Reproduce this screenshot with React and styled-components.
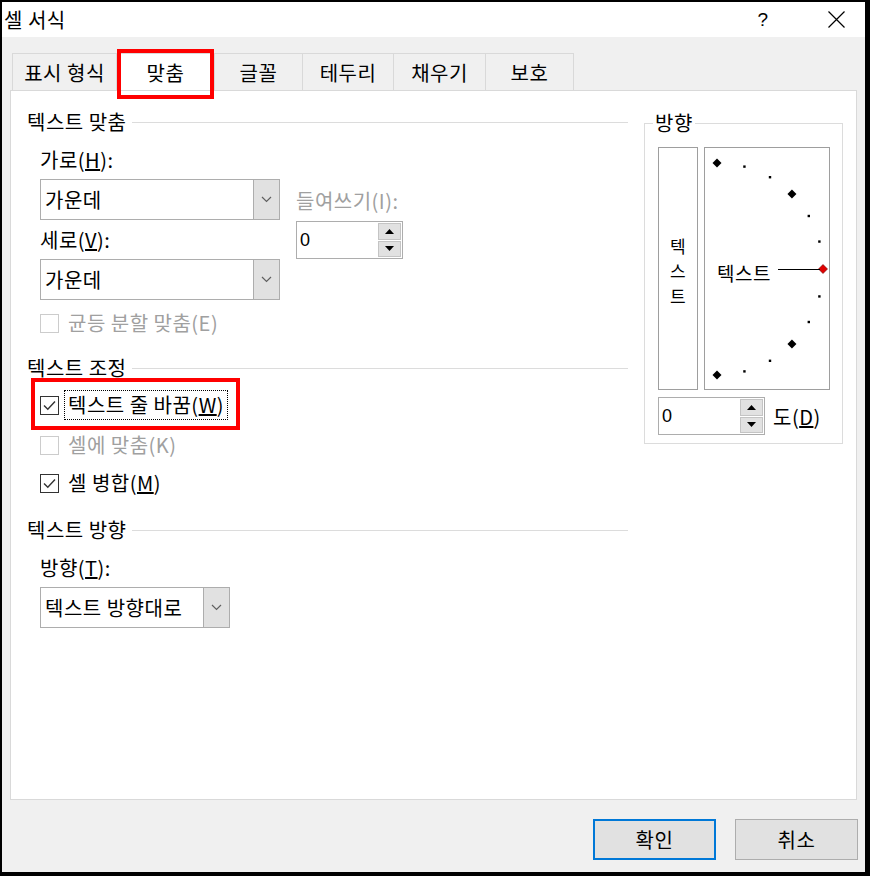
import React from "react";
import styled, { createGlobalStyle } from "styled-components";

const GlobalStyle = createGlobalStyle`
  body {
    margin: 0;
    padding: 0;
    background: #000;
    font-family: "Noto Sans CJK KR", "Noto Sans", sans-serif;
    font-size: 20px;
    letter-spacing: 0.5px;
    color: #000;
  }
`;

const Dialog = styled.div`
  width: 870px;
  height: 876px;
  box-sizing: border-box;
  border-style: solid;
  border-color: #000;
  border-width: 2px 5px 4px 2px;
  background: #f0f0f0;
  display: flex;
  flex-direction: column;
`;

const TitleBar = styled.div`
  height: 35px;
  background: #fff;
  display: flex;
  align-items: center;
  padding-left: 2px;
`;

const Title = styled.div`
  flex: 1;
  line-height: 20px;
  margin-top: 1px;
`;

const HelpButton = styled.div`
  width: 30px;
  text-align: center;
  font-family: "Liberation Sans", sans-serif;
  font-size: 19px;
  margin-right: 49px;
`;

const CloseButton = styled.div`
  width: 18px;
  height: 18px;
  margin-right: 20px;
  display: flex;
  align-items: center;
  justify-content: center;
`;

const TabList = styled.div`
  display: flex;
  margin-top: 16px;
  padding-left: 10px;
  height: 37px;
`;

const Tab = styled.div`
  position: relative;
  width: ${(p) => p.$w}px;
  box-sizing: border-box;
  border: 1px solid #d9d9d9;
  border-left-width: ${(p) => (p.$first ? 1 : 0)}px;
  border-bottom: none;
  background: ${(p) => (p.$active ? "#fff" : "#f0f0f0")};
  display: flex;
  align-items: center;
  justify-content: center;
  padding-top: 1px;
  z-index: ${(p) => (p.$active ? 2 : 0)};

  ${(p) =>
    p.$active &&
    `
    &::after {
      content: "";
      position: absolute;
      left: 0;
      right: 0;
      top: -5px;
      bottom: -9px;
      border: 4px solid #ff0000;
    }
  `}
`;

const Pane = styled.div`
  margin: 0 8px;
  height: 710px;
  box-sizing: border-box;
  border: 1px solid #d9d9d9;
  background: #fff;
  padding: 21px 13px 0 16px;
  display: flex;
  gap: 16px;
  align-items: flex-start;
`;

const LeftColumn = styled.div`
  width: 601px;
  display: flex;
  flex-direction: column;
`;

const GroupHeading = styled.div`
  display: flex;
  align-items: center;
  gap: 6px;
  height: 20px;
  line-height: 20px;
  margin-top: ${(p) => p.$mt || 0}px;

  &::after {
    content: "";
    flex: 1;
    height: 1px;
    background: #dcdcdc;
  }
`;

const Indent = styled.div`
  padding-left: 13px;
  display: flex;
  flex-direction: column;
  align-items: flex-start;
`;

const FieldLabel = styled.div`
  height: 20px;
  line-height: 20px;
  white-space: nowrap;
  color: ${(p) => (p.$disabled ? "#a0a0a0" : "#000")};
  margin-top: ${(p) => p.$mt || 0}px;
`;

const AlignGrid = styled.div`
  display: grid;
  grid-template-columns: 240px 107px;
  column-gap: 16px;
  margin-top: 18px;

  & > * {
    grid-column: 1;
  }
`;

const Combo = styled.div`
  width: ${(p) => p.$w}px;
  height: 41px;
  box-sizing: border-box;
  border: 1px solid #adadad;
  background: #fff;
  display: flex;
  align-items: stretch;
  margin-top: ${(p) => p.$mt || 0}px;
`;

const ComboValue = styled.div`
  flex: 1;
  display: flex;
  align-items: center;
  padding-left: 4px;
  white-space: nowrap;
`;

const ComboButton = styled.div`
  width: 25px;
  background: #e1e1e1;
  border-left: 1px solid #adadad;
  display: flex;
  align-items: center;
  justify-content: center;
`;

const IndentBlock = styled.div`
  && {
    grid-column: 2;
    grid-row: 2 / 5;
  }
  margin-top: 21px;
  align-self: start;
`;

const Spinner = styled.div`
  width: ${(p) => p.$w}px;
  height: 38px;
  box-sizing: border-box;
  border: 1px solid #adadad;
  background: #fff;
  display: flex;
  align-items: stretch;
  margin-top: ${(p) => p.$mt || 0}px;
`;

const SpinValue = styled.div`
  flex: 1;
  display: flex;
  align-items: center;
  padding-left: 3px;
  font-family: "Liberation Sans", sans-serif;
  font-size: 18px;
`;

const SpinButtons = styled.div`
  width: 23px;
  margin: 1px 1px 1px 0;
  display: flex;
  flex-direction: column;
  gap: 1px;
`;

const SpinBtn = styled.div`
  flex: 1;
  background: #e1e1e1;
  border: 1px solid #c4c4c4;
  display: flex;
  align-items: center;
  justify-content: center;
`;

const CheckRow = styled.div`
  position: relative;
  display: inline-flex;
  align-items: center;
  align-self: flex-start;
  min-height: 20px;
  margin-top: ${(p) => p.$mt || 0}px;
  color: ${(p) => (p.$disabled ? "#a0a0a0" : "#000")};
  white-space: nowrap;

  ${(p) =>
    p.$marked &&
    `
    &::after {
      content: "";
      position: absolute;
      left: -9px;
      right: -12px;
      top: -12px;
      bottom: -10px;
      border: 4px solid #ff0000;
    }
  `}
`;

const Box = styled.div`
  width: 19px;
  height: 19px;
  box-sizing: border-box;
  border: 1px solid ${(p) => (p.$disabled ? "#cccccc" : "#333333")};
  background: #fff;
  display: flex;
  align-items: center;
  justify-content: center;
`;

const CheckText = styled.span`
  margin-left: ${(p) => (p.$focused ? 5 : 9)}px;
  padding: ${(p) => (p.$focused ? "4px 3px" : "0")};
  border: ${(p) => (p.$focused ? "1px dotted #000" : "none")};
  line-height: 20px;
`;

const OrientGroup = styled.div`
  position: relative;
  width: 199px;
  box-sizing: border-box;
  margin-top: 11px;
  border: 1px solid #dcdcdc;
  padding: 23px 12px 8px 13px;
`;

const Legend = styled.span`
  position: absolute;
  top: -11px;
  left: 8px;
  padding: 0 2px;
  background: #fff;
  line-height: 20px;
`;

const OrientRow = styled.div`
  display: flex;
  gap: 6px;
`;

const VerticalBox = styled.div`
  width: 40px;
  height: 243px;
  box-sizing: border-box;
  border: 1px solid #9e9e9e;
  display: flex;
  flex-direction: column;
  align-items: center;
  justify-content: center;
  font-size: 17px;
  line-height: 25px;
  padding-top: 4px;
`;

const DialBox = styled.div`
  width: 126px;
  height: 243px;
  box-sizing: border-box;
  border: 1px solid #9e9e9e;
`;

const DegreeRow = styled.div`
  display: flex;
  align-items: center;
  gap: 8px;
  margin-top: 7px;
`;

const Footer = styled.div`
  display: flex;
  justify-content: flex-end;
  gap: 19px;
  padding: 19px 7px 0 0;
`;

const Button = styled.div`
  width: 123px;
  height: 41px;
  box-sizing: border-box;
  background: #e1e1e1;
  border: ${(p) => (p.$default ? "2px solid #0078d7" : "1px solid #adadad")};
  display: flex;
  align-items: center;
  justify-content: center;
`;

const Chevron = () => (
  <svg width="11" height="7" viewBox="0 0 11 7">
    <path d="M1 1 L5.5 5.5 L10 1" fill="none" stroke="#606060" strokeWidth="1.2" />
  </svg>
);

const Arrow = ({ up }) => (
  <svg width="9" height="5" viewBox="0 0 9 5">
    <path d={up ? "M0 5 L4.5 0 L9 5 Z" : "M0 0 L4.5 5 L9 0 Z"} fill="#000" />
  </svg>
);

const Check = () => (
  <svg width="13" height="11" viewBox="0 0 13 11">
    <path d="M1 5.5 L4.8 9.3 L12 1.5" fill="none" stroke="#333" strokeWidth="1.4" />
  </svg>
);

const ComboBox = ({ w, mt, value }) => (
  <Combo $w={w} $mt={mt}>
    <ComboValue>{value}</ComboValue>
    <ComboButton>
      <Chevron />
    </ComboButton>
  </Combo>
);

const SpinBox = ({ w, mt }) => (
  <Spinner $w={w} $mt={mt}>
    <SpinValue>0</SpinValue>
    <SpinButtons>
      <SpinBtn>
        <Arrow up />
      </SpinBtn>
      <SpinBtn>
        <Arrow />
      </SpinBtn>
    </SpinButtons>
  </Spinner>
);

const Dial = () => {
  const cx = 12;
  const cy = 121;
  const r = 106;
  const marks = [];
  for (let a = -90; a <= 90; a += 15) {
    const rad = (a * Math.PI) / 180;
    const x = cx + r * Math.cos(rad);
    const y = cy - r * Math.sin(rad);
    if (a % 45 === 0) {
      const s = 4.5;
      marks.push(
        <path
          key={a}
          d={`M${x} ${y - s} L${x + s} ${y} L${x} ${y + s} L${x - s} ${y} Z`}
          fill={a === 0 ? "#e00000" : "#000"}
          stroke={a === 0 ? "#600" : "none"}
          strokeWidth="0.6"
        />
      );
    } else {
      marks.push(<rect key={a} x={x - 1.2} y={y - 1.2} width="2.4" height="2.4" fill="#000" />);
    }
  }
  return (
    <svg width="124" height="241" viewBox="0 0 124 241">
      {marks}
      <line x1="73" y1={cy + 0.5} x2="115" y2={cy + 0.5} stroke="#000" strokeWidth="1" />
      <text
        x="12"
        y={cy + 3}
        dominantBaseline="central"
        fontSize="19"
        fontFamily='"Noto Sans CJK KR", sans-serif'
        fill="#000"
      >
        텍스트
      </text>
    </svg>
  );
};

export default function App() {
  const tabs = [
    { label: "표시 형식", w: 105 },
    { label: "맞춤", w: 98, active: true },
    { label: "글꼴", w: 88 },
    { label: "테두리", w: 91 },
    { label: "채우기", w: 92 },
    { label: "보호", w: 88 },
  ];

  return (
    <>
      <GlobalStyle />
      <Dialog>
        <TitleBar>
          <Title>셀 서식</Title>
          <HelpButton>?</HelpButton>
          <CloseButton>
            <svg width="17" height="17" viewBox="0 0 17 17">
              <path d="M0.5 0.5 L16.5 16.5 M16.5 0.5 L0.5 16.5" stroke="#000" strokeWidth="1.2" />
            </svg>
          </CloseButton>
        </TitleBar>

        <TabList>
          {tabs.map((t, i) => (
            <Tab key={t.label} $w={t.w} $active={t.active} $first={i === 0}>
              {t.label}
            </Tab>
          ))}
        </TabList>

        <Pane>
          <LeftColumn>
            <GroupHeading>텍스트 맞춤</GroupHeading>
            <Indent>
              <AlignGrid>
                <FieldLabel>
                  가로(<u>H</u>):
                </FieldLabel>
                <ComboBox w={240} mt={9} value="가운데" />
                <FieldLabel $mt={10}>
                  세로(<u>V</u>):
                </FieldLabel>
                <ComboBox w={240} mt={9} value="가운데" />
                <IndentBlock>
                  <FieldLabel $disabled>들여쓰기(I):</FieldLabel>
                  <SpinBox w={107} mt={10} />
                </IndentBlock>
              </AlignGrid>
              <CheckRow $disabled $mt={13}>
                <Box $disabled />
                <CheckText>균등 분할 맞춤(E)</CheckText>
              </CheckRow>
            </Indent>

            <GroupHeading $mt={25}>텍스트 조정</GroupHeading>
            <Indent>
              <CheckRow $marked $mt={12}>
                <Box>
                  <Check />
                </Box>
                <CheckText $focused>
                  텍스트 줄 바꿈(<u>W</u>)
                </CheckText>
              </CheckRow>
              <CheckRow $disabled $mt={15}>
                <Box $disabled />
                <CheckText>셀에 맞춤(K)</CheckText>
              </CheckRow>
              <CheckRow $mt={18}>
                <Box>
                  <Check />
                </Box>
                <CheckText>
                  셀 병합(<u>M</u>)
                </CheckText>
              </CheckRow>
            </Indent>

            <GroupHeading $mt={27}>텍스트 방향</GroupHeading>
            <Indent>
              <FieldLabel $mt={18}>
                방향(<u>T</u>):
              </FieldLabel>
              <ComboBox w={190} mt={9} value="텍스트 방향대로" />
            </Indent>
          </LeftColumn>

          <OrientGroup>
            <Legend>방향</Legend>
            <OrientRow>
              <VerticalBox>
                <span>텍</span>
                <span>스</span>
                <span>트</span>
              </VerticalBox>
              <DialBox>
                <Dial />
              </DialBox>
            </OrientRow>
            <DegreeRow>
              <SpinBox w={107} />
              <span>
                도(<u>D</u>)
              </span>
            </DegreeRow>
          </OrientGroup>
        </Pane>

        <Footer>
          <Button $default>확인</Button>
          <Button>취소</Button>
        </Footer>
      </Dialog>
    </>
  );
}
